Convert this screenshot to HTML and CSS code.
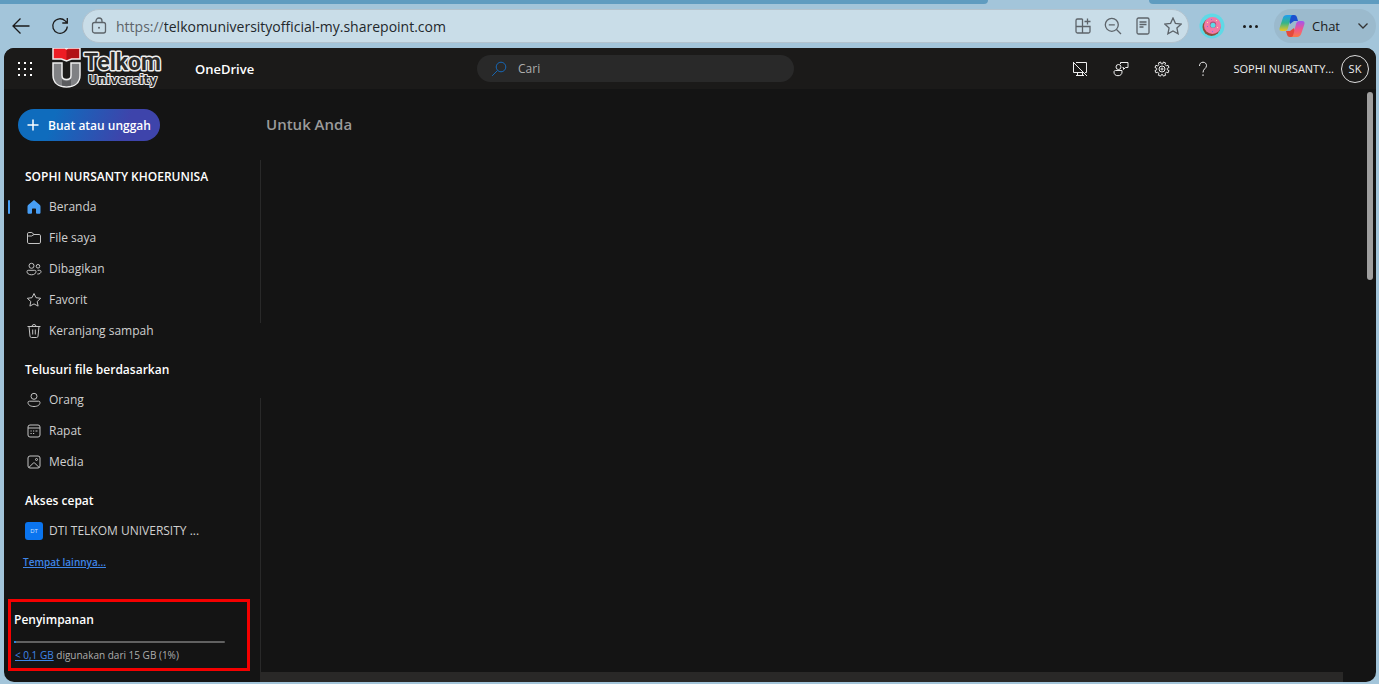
FILE: index.html
```html
<!DOCTYPE html>
<html lang="id">
<head>
    <meta charset="UTF-8">
    <meta name="viewport" content="width=device-width, initial-scale=1.0">
    <title>OneDrive</title>
    <link rel="stylesheet" href="styles.css">
</head>
<body>
    <div class="tabs">
        <div class="tab-left"></div>
        <div class="tab-right"></div>
    </div>
    <div class="toolbar">
        <button class="nav-btn" aria-label="Back">
            <svg width="20" height="20" viewBox="0 0 20 20"><path d="M18.500 10H2M9.500 2.500 2 10l7.500 7.500"/></svg>
        </button>
        <button class="nav-btn" aria-label="Refresh">
            <svg width="20" height="20" viewBox="0 0 20 20"><path d="M17.300 10.500a7.300 7.300 0 1 1-2.100-5.600l2.100 2.100M17.300 2v5h-5"/></svg>
        </button>
        <div class="address">
            <svg class="lock" width="16" height="18" viewBox="0 0 16 18"><rect x="1.500" y="5.500" width="13" height="10.500" rx="2"/><path d="M5 5.500V4a3 3 0 0 1 6 0v1.500"/><circle class="dot" cx="8" cy="10.800" r="1"/></svg>
            <label class="url"><span>https://</span><input type="text" aria-label="Address" value="telkomuniversityofficial-my.sharepoint.com"></label>
            <button aria-label="Apps">
                <svg width="18" height="18" viewBox="0 0 18 18"><path d="M8.500 2H3.500A1.500 1.500 0 0 0 2 3.500v11A1.500 1.500 0 0 0 3.500 16h11a1.500 1.500 0 0 0 1.500-1.500V9.500H2M8.500 2v14M13.500 1.500v6M10.500 4.500h6"/></svg>
            </button>
            <button aria-label="Zoom out">
                <svg width="18" height="18" viewBox="0 0 18 18"><circle cx="7.800" cy="7.800" r="6.500"/><path d="M4.800 7.800h6M12.500 12.500l4.500 4.500"/></svg>
            </button>
            <button aria-label="Reader">
                <svg width="18" height="18" viewBox="0 0 18 18"><rect x="3" y="1" width="12" height="16" rx="1.500"/><path d="M5.500 5h7M5.500 7.500h7M5.500 10h4"/></svg>
            </button>
            <button aria-label="Favorite">
                <svg width="18" height="18" viewBox="0 0 18 18"><path d="m9 1 2.400 5.300 5.800.7-4.300 4 1.200 5.800L9 14l-5.100 2.800L5.100 11 .8 7l5.800-.7z"/></svg>
            </button>
        </div>
        <button class="profile" aria-label="Profile">
            <svg width="26" height="26" viewBox="0 0 26 26">
                <circle cx="13" cy="13" r="12.500" fill="#5fd9e6"/>
                <circle cx="12.500" cy="14" r="9" fill="#8c4f3a"/>
                <circle cx="13.500" cy="12.500" r="8.500" fill="#f27aa6"/>
                <circle cx="14" cy="11.700" r="3.200" fill="#b0557c"/>
                <circle cx="14" cy="12.300" r="2.500" fill="#5fd9e6"/>
                <path stroke="#ffe3a0" d="m8 9 1 1M17 7l1 1M18 15l1-1"/><path stroke="#8c6be0" d="m12 6 1 1M8 14l1-1M13 18l1 1"/>
            </svg>
        </button>
        <button class="more" aria-label="More"><i></i><i></i><i></i></button>
        <button class="chat">
            <svg width="26" height="24" viewBox="0 0 26 24">
                <defs>
                    <linearGradient id="cool" x1="0" y1="0" x2="0" y2="1"><stop offset="0" stop-color="#1f9df0"/><stop offset=".5" stop-color="#35b58a"/><stop offset="1" stop-color="#f2c51d"/></linearGradient>
                    <linearGradient id="warm" x1="0" y1="0" x2="0" y2="1"><stop offset="0" stop-color="#a055f0"/><stop offset=".5" stop-color="#ee5590"/><stop offset="1" stop-color="#fb7b45"/></linearGradient>
                </defs>
                <path fill="#1b50cf" d="M8 1h7c2 0 2.500 1 3 2.500L19 7h-4l-4 3z"/>
                <path fill="url(#cool)" d="M8 1h6c-1.500 0-2 1-2.500 3L9 14c-.6 2-1.400 3-3.500 3H3c-2.300 0-3-1.400-2.300-3.600l3-9C4.500 2 5.800 1 8 1z"/>
                <path fill="#e54a3c" d="M18 23h-7c-2 0-2.500-1-3-2.500L7 17h4l4-3z"/>
                <path fill="url(#warm)" d="M18 23h-6c1.500 0 2-1 2.500-3L17 10c.6-2 1.400-3 3.500-3H23c2.300 0 3 1.400 2.300 3.600l-3 9C21.500 22 20.200 23 18 23z"/>
            </svg>
            <span>Chat</span>
            <svg class="chevron" width="12" height="8" viewBox="0 0 12 8"><path d="m1.500 1.500 4.500 4.500 4.500-4.500"/></svg>
        </button>
    </div>

    <div class="page">
        <header class="topbar">
            <button class="waffle" aria-label="Apps"><i></i><i></i><i></i><i></i><i></i><i></i><i></i><i></i><i></i></button>
            <svg class="logo" width="116" height="41" viewBox="0 0 116 41">
                <path fill="#ed1c24" stroke="#eee" stroke-width="1.500" d="M2 0h12l1.500 1L17 0h12v11h-8.500L15.500 13l-5-2H2z"/>
                <path fill="#b11116" d="M15.500 1.500 28 1v9h-8l-4.500 2z"/>
                <path fill="#808184" stroke="#eee" stroke-width="1.500" d="M2 15h9v12.500c0 2.500 1.500 4 4.500 4s4.500-1.500 4.500-4V15h9v12c0 7.500-5 12-13.500 12S2 34.500 2 27z"/>
                <path fill="#5b5c5f" d="M11 31c2 3 7 3 9 0v6.500c-3 1-6 1-9 0z"/>
                <text class="logo-big" x="33" y="22">Telkom</text>
                <text class="logo-small" x="37" y="36">University</text>
            </svg>
            <a class="brand" href="#">OneDrive</a>
            <label class="search">
                <svg width="16" height="16" viewBox="0 0 16 16"><circle cx="10" cy="6" r="4.800"/><path d="M6.500 9.500 1.200 14.800"/></svg>
                <input type="search" aria-label="Cari" placeholder="Cari">
            </label>
            <div class="actions">
                <button aria-label="Desktop">
                    <svg width="16" height="16" viewBox="0 0 16 16"><path d="M4 1.500h10.500v10H13M11 11.500H1.500v-10M5.500 11.500v3M10.500 11.500v3M4 14.500h8M1 1l14 14"/></svg>
                </button>
                <button aria-label="Feedback">
                    <svg width="16" height="16" viewBox="0 0 16 16"><circle cx="5.500" cy="6" r="2.500"/><path d="M2.500 9.500h6.500v1.500c0 2.300-1.400 3.700-4 3.700s-4-1.400-4-3.700c0-1 .6-1.500 1.500-1.500zM7.500 3V1.500h7.500v5h-2.500l-2 2v-2H9.500"/></svg>
                </button>
                <button aria-label="Settings">
                    <svg width="16" height="16" viewBox="0 0 16 16"><path d="m6.700 1 .4 1.800 1.800 0L9.300 1l2.300.9-.6 1.700 1.300 1.300 1.800-.6.9 2.200-1.700.8v1.500l1.700.8-.9 2.200-1.800-.5-1.300 1.200.6 1.800-2.300.8-.8-1.700H7.500l-.8 1.700-2.300-.8.600-1.800-1.300-1.200-1.800.5L1 9.600l1.700-.8V7.300L1 6.500l.9-2.200 1.800.6L5 3.600l-.6-1.700z"/><circle cx="8" cy="8" r="3"/><circle cx="8" cy="8" r="1"/></svg>
                </button>
                <button aria-label="Help">
                    <svg class="help" width="16" height="16" viewBox="0 0 16 16"><path d="M4.500 5c0-2.300 1.400-3.800 3.500-3.800s3.500 1.400 3.500 3.500C11.500 7.500 8 7.800 8 11.500M8 13.300V15"/></svg>
                </button>
            </div>
            <button class="account"><span class="name">SOPHI NURSANTY...</span><span class="avatar">SK</span></button>
        </header>

        <div class="body">
            <nav class="sidebar">
                <button class="create">
                    <svg width="12" height="12" viewBox="0 0 12 12"><path d="M6 .5v11M.5 6h11"/></svg>
                    Buat atau unggah
                </button>
                <h2>SOPHI NURSANTY KHOERUNISA</h2>
                <ul>
                    <li class="active"><a href="#">
                        <svg width="16" height="16" viewBox="0 0 16 16"><path class="solid" d="M8 1 2.400 5.800c-.6.500-.9 1-.9 1.700v6c0 .8.500 1.300 1.300 1.300h2c.7 0 1.200-.5 1.200-1.300v-3c0-.6.300-1 1-1h2c.7 0 1 .4 1 1v3c0 .8.500 1.300 1.200 1.300h2c.8 0 1.300-.5 1.300-1.300v-6c0-.7-.3-1.200-.9-1.700z"/></svg>
                        Beranda</a></li>
                    <li><a href="#">
                        <svg width="16" height="16" viewBox="0 0 16 16"><path d="M1.500 3.800c0-.8.500-1.300 1.300-1.300h3L8 4.500h5.200c.8 0 1.300.5 1.300 1.300v6.400c0 .8-.5 1.300-1.300 1.300H2.800c-.8 0-1.300-.5-1.300-1.300zM1.500 6h4L8 4.500"/></svg>
                        File saya</a></li>
                    <li><a href="#">
                        <svg width="16" height="16" viewBox="0 0 16 16"><circle cx="5.500" cy="4.800" r="2.500"/><circle cx="12" cy="5.300" r="1.800"/><path d="M1 10.500C1 9.800 1.500 9.300 2.200 9.300h6.600c.7 0 1.200.5 1.200 1.200 0 2-1.800 3.300-4.500 3.300S1 12.500 1 10.500zM11.500 9.300h2.300c.7 0 1.200.5 1.200 1.200 0 1.700-1.400 2.700-3.700 2.500"/></svg>
                        Dibagikan</a></li>
                    <li><a href="#">
                        <svg width="16" height="16" viewBox="0 0 16 16"><path d="m8 1.500 2 4.200 4.700.6-3.500 3.200.9 4.600L8 11.900l-4.100 2.200.9-4.600L1.300 6.300 6 5.700z"/></svg>
                        Favorit</a></li>
                    <li><a href="#">
                        <svg width="16" height="16" viewBox="0 0 16 16"><path d="M1.500 3.500h13M6 3.500a2 2 0 0 1 4 0M3 3.500l1 9.700c.1.800.6 1.300 1.400 1.300h5.200c.8 0 1.300-.5 1.400-1.300l1-9.700M6.700 6.500v5M9.300 6.500v5"/></svg>
                        Keranjang sampah</a></li>
                </ul>
                <h2>Telusuri file berdasarkan</h2>
                <ul>
                    <li><a href="#">
                        <svg width="16" height="16" viewBox="0 0 16 16"><circle cx="8" cy="4.300" r="3"/><path d="M2 10.500c0-.8.500-1.300 1.300-1.300h9.400c.8 0 1.300.5 1.300 1.300 0 2.500-2.500 4-6 4s-6-1.500-6-4z"/></svg>
                        Orang</a></li>
                    <li><a href="#">
                        <svg width="16" height="16" viewBox="0 0 16 16"><rect x="2" y="2" width="12" height="12" rx="2"/><path d="M2 5h12M7 8h1.200M9.500 8h2M4.500 8h1.200M4.500 10.500h1.200M7 10.500h1.200"/></svg>
                        Rapat</a></li>
                    <li><a href="#">
                        <svg width="16" height="16" viewBox="0 0 16 16"><rect x="2" y="2" width="12" height="12" rx="2"/><circle cx="10.500" cy="5.500" r="1"/><path d="m3 13.300 4.300-4.200c.4-.4 1-.4 1.400 0l4.300 4.200"/></svg>
                        Media</a></li>
                </ul>
                <h2>Akses cepat</h2>
                <ul>
                    <li><a href="#"><span class="site">DT</span>DTI TELKOM UNIVERSITY ...</a></li>
                </ul>
                <a class="more-places" href="#">Tempat lainnya...</a>
                <section class="storage">
                    <h3>Penyimpanan</h3>
                    <div class="meter"><div class="used" style="width: 1%"></div></div>
                    <p><a href="#">&lt; 0,1 GB</a> digunakan dari 15 GB (1%)</p>
                </section>
            </nav>
            <main>
                <h1>Untuk Anda</h1>
                <div class="panels">
                    <div class="line line-top"></div>
                    <div class="line line-rest"></div>
                    <div class="footer-bar"></div>
                </div>
            </main>
            <div class="scrollbar"><div class="thumb"></div></div>
        </div>
    </div>
</body>
</html>
```
FILE: styles.css
```css
*{
    margin: 0;
    padding: 0;
    box-sizing: border-box;
}
body{
    min-height: 100vh;
    display: flex;
    flex-direction: column;
    background-color: #a3c5da;
    font-family: "Open Sans", "Noto Sans", sans-serif;
    font-size: 12px;
    color: #d0d0d0;
}
button, input{
    font: inherit;
    color: inherit;
    background: none;
    border: none;
    outline: none;
}
button{
    display: flex;
    align-items: center;
    justify-content: center;
    cursor: pointer;
}
svg{
    flex: none;
    fill: none;
    stroke: currentColor;
}
ul{
    list-style: none;
}

/* browser */
.tabs{
    height: 4px;
    display: flex;
    justify-content: space-between;
}
.tab-left, .tab-right{
    background-color: #5f9cc0;
}
.tab-left{
    width: 988px;
    border-bottom-right-radius: 6px;
}
.tab-right{
    width: 230px;
    border-bottom-left-radius: 6px;
}
.toolbar{
    height: 44px;
    padding: 0 3px 0 11px;
    display: flex;
    align-items: center;
    color: #1b1b1b;
}
.nav-btn{
    width: 20px;
    margin-right: 19px;
}
.nav-btn svg{
    stroke-width: 1.3;
}
.nav-btn + .nav-btn{
    margin-right: 12px;
}
.address{
    flex: 1;
    height: 34px;
    padding: 0 6px 0 8px;
    display: flex;
    align-items: center;
    gap: 12px;
    border: 1px solid #b3c3ce;
    border-radius: 17px;
    background-color: #c9dde8;
    color: #5d646a;
}
.address svg{
    stroke-width: 1.3;
}
.address .lock{
    margin-right: -3px;
}
.dot{
    fill: currentColor;
    stroke: none;
}
.url{
    flex: 1;
    display: flex;
    font-size: 14px;
}
.url input{
    flex: 1;
    min-width: 0;
    color: #23282c;
}
.profile{
    margin-left: 10px;
}
.profile svg{
    stroke: none;
}
.more{
    width: 16px;
    margin: 0 15px 0 18px;
    gap: 3px;
}
.more i{
    width: 3px;
    height: 3px;
    border-radius: 50%;
    background-color: #1b1b1b;
}
.chat{
    height: 34px;
    padding: 0 7px 0 5px;
    gap: 7px;
    border-radius: 17px;
    background-color: #9bbacd;
    font-size: 13px;
}
.chat svg{
    stroke: none;
}
.chat .chevron{
    margin-left: 10px;
    stroke: #333;
    stroke-width: 1.3;
}

/* onedrive */
.page{
    flex: 1;
    margin: 0 3px 2px 4px;
    display: flex;
    flex-direction: column;
    border-radius: 10px;
    overflow: hidden;
    background-color: #141414;
}
.topbar{
    height: 41px;
    padding: 0 7px 0 14px;
    display: flex;
    align-items: center;
    background-color: #1b1a19;
    color: #eee;
}
.topbar svg{
    stroke-width: 1;
}
.waffle{
    width: 14px;
    display: grid;
    grid-template-columns: repeat(3, 2px);
    gap: 4px;
}
.waffle i{
    width: 2px;
    height: 2px;
    background-color: #fff;
}
.logo{
    margin-left: 19px;
    stroke: none;
}
.logo text{
    font-family: Roboto, sans-serif;
    font-weight: 700;
    fill: #2b2a29;
    stroke: #eee;
    stroke-width: 3px;
    stroke-linejoin: round;
    paint-order: stroke;
}
.logo .logo-big{
    font-size: 23px;
}
.logo .logo-small{
    font-family: "DejaVu Sans", sans-serif;
    font-size: 12px;
    stroke-width: 2px;
}
.brand{
    width: 282px;
    margin-left: 28px;
    color: #fff;
    font-size: 13px;
    font-weight: 600;
    text-decoration: none;
}
.search{
    flex: 0 1 317px;
    height: 27px;
    padding: 0 14px;
    display: flex;
    align-items: center;
    gap: 11px;
    border-radius: 14px;
    background-color: #292929;
}
.search svg{
    stroke: #1767b5;
}
.search input{
    flex: 1;
    min-width: 0;
}
.search input::placeholder{
    color: #adadad;
}
.actions{
    margin-left: auto;
    display: flex;
    gap: 25px;
}
.account{
    margin-left: 23px;
    gap: 7px;
    font-size: 11px;
}
.avatar{
    width: 28px;
    height: 28px;
    border: 1px solid #ddd;
    border-radius: 50%;
    line-height: 26px;
    text-align: center;
}
.body{
    flex: 1;
    display: flex;
}
.sidebar{
    width: 256px;
    padding-top: 20px;
}
.create{
    width: 142px;
    height: 32px;
    margin: 0 0 20px 14px;
    gap: 9px;
    border-radius: 16px;
    background: linear-gradient(110deg, #0f6cbd 25%, #3e44ab 75%);
    color: #fff;
    font-weight: 600;
}
.create svg{
    stroke-width: 1.5;
}
.sidebar h2{
    padding: 2px 0 0 21px;
    color: #fff;
    font-size: 12px;
    font-weight: 600;
    line-height: 28px;
}
.sidebar ul + h2{
    margin-top: 8px;
}
.sidebar li a{
    height: 31px;
    padding-left: 22px;
    display: flex;
    align-items: center;
    gap: 7px;
    color: #d0d0d0;
    text-decoration: none;
}
.sidebar li svg{
    color: #c4c4c4;
}
.sidebar .active a{
    padding-left: 18px;
    font-weight: 500;
}
.active a::before{
    content: "";
    width: 2px;
    height: 14px;
    margin: 0 9px 0 -14px;
    border-radius: 1px;
    background-color: #479ef5;
}
.solid{
    fill: #479ef5;
    stroke: none;
}
.site{
    width: 18px;
    height: 18px;
    margin: 0 -1px;
    border-radius: 3px;
    background-color: #0a74ef;
    color: #cfe4ff;
    font-size: 6px;
    line-height: 18px;
    text-align: center;
}
.more-places{
    margin: 8px 0 0 19px;
    display: block;
    font-size: 10px;
    font-weight: 600;
    line-height: 16px;
}
.storage{
    width: 242px;
    height: 72px;
    margin: 29px 0 0 4px;
    padding: 8px 22px 0 3px;
    border: 3px solid #f40000;
}
.storage h3{
    color: #fff;
    font-size: 12px;
    font-weight: 600;
    line-height: 20px;
}
.meter{
    height: 2px;
    margin: 11px 0 4px;
    border-radius: 1px;
    background-color: #616161;
}
.used{
    height: 2px;
    background-color: #2886de;
}
.storage p{
    padding-left: 1px;
    font-size: 10px;
    line-height: 16px;
    color: #adadad;
}
.storage a, .more-places{
    color: #3f86e8;
}
main{
    flex: 1;
    display: flex;
    flex-direction: column;
}
h1{
    padding: 24px 0 25px 6px;
    color: #9b9b9b;
    font-size: 15px;
    font-weight: 600;
    line-height: 22px;
}
.panels{
    flex: 1;
    display: flex;
    flex-direction: column;
}
.line{
    width: 1px;
    background-color: #292929;
}
.line-top{
    height: 163px;
    margin-bottom: 75px;
}
.line-rest{
    flex: 1;
}
.footer-bar{
    height: 10px;
    background-color: #292827;
}
.scrollbar{
    width: 33px;
    padding: 3px 3px 0 0;
}
.thumb{
    width: 6px;
    height: 188px;
    margin-left: auto;
    border-radius: 3px;
    background-color: #9f9f9f;
}
```
